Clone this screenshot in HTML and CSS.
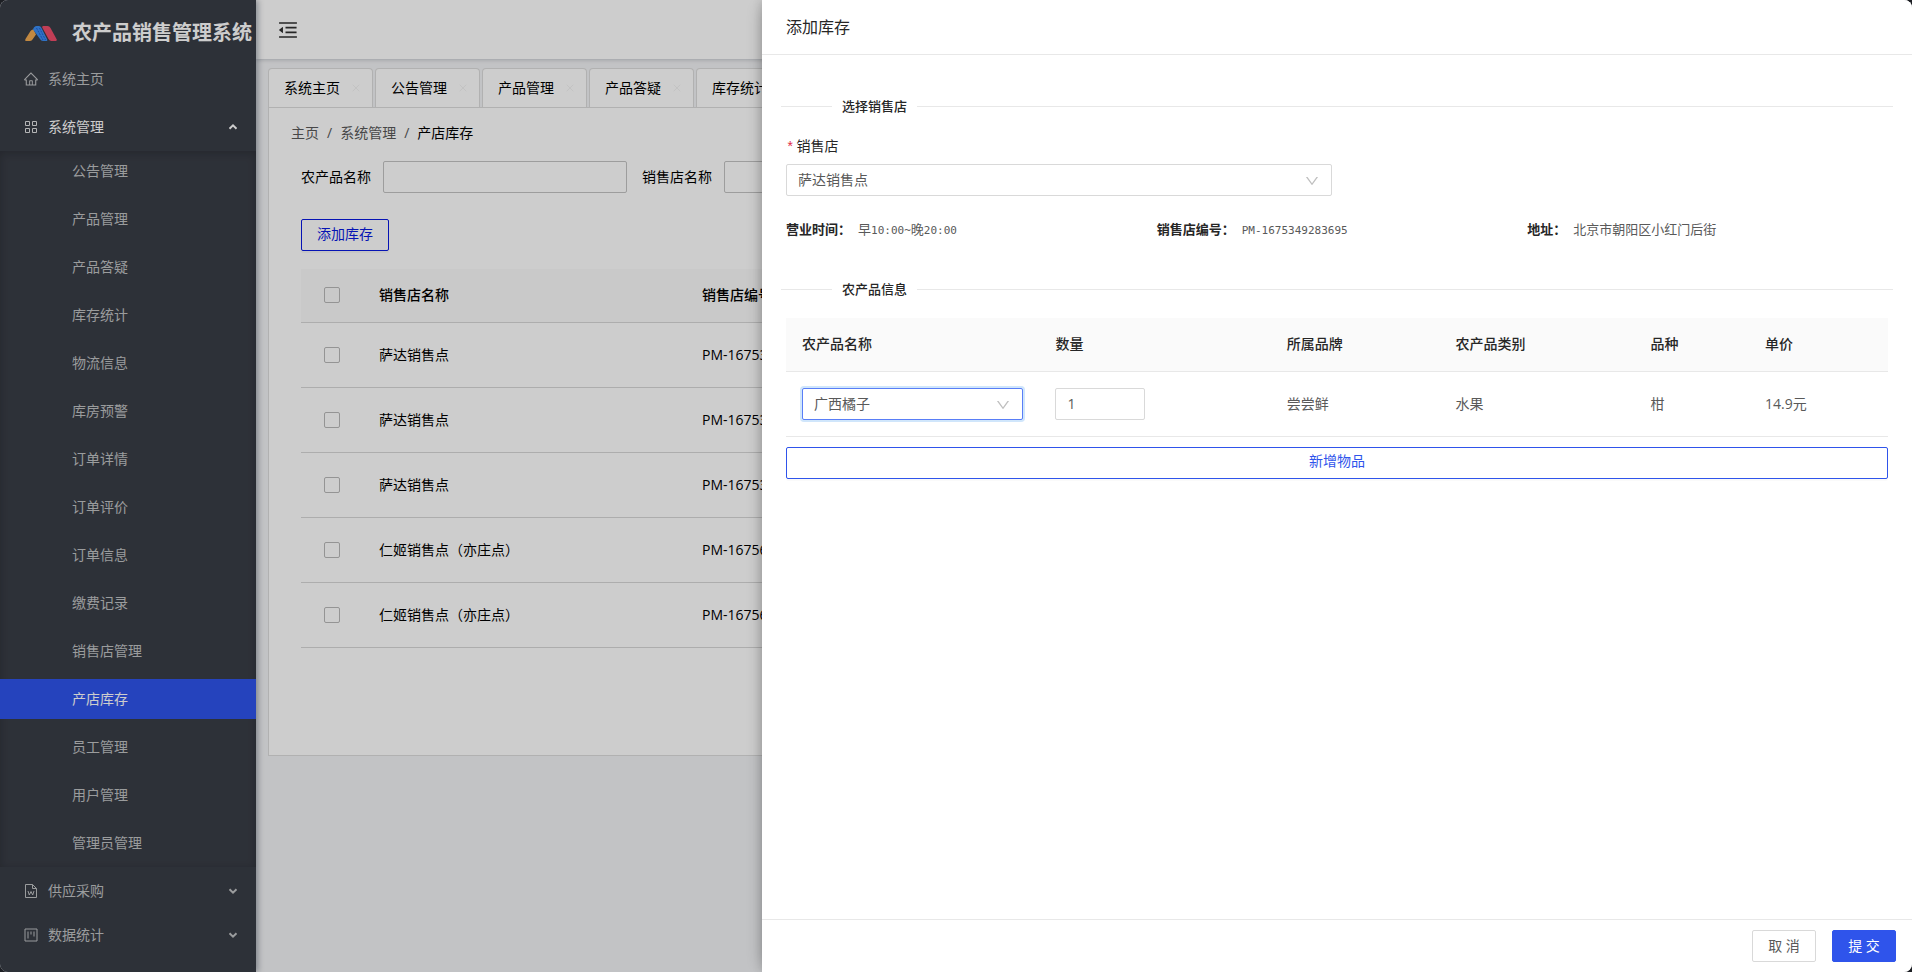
FILE: index.html
```html
<!DOCTYPE html>
<html lang="zh-CN">
<head>
<meta charset="utf-8">
<title>农产品销售管理系统</title>
<link rel="stylesheet" href="styles.css">
</head>
<body>
<svg class="defs" aria-hidden="true">
  <symbol id="arrow-down" viewBox="0 0 1024 1024"><path fill="currentColor" d="M884 256h-75c-5.1 0-9.900 2.500-12.900 6.600L512 654.200 227.900 262.600c-3-4.100-7.800-6.600-12.900-6.600h-75c-6.500 0-10.300 7.400-6.500 12.700l352.600 486.100c12.800 17.600 39 17.600 51.700 0l352.600-486.100c3.900-5.300.1-12.700-6.400-12.700z"/></symbol>
  <symbol id="caret" viewBox="0 0 10 10"><path fill="none" stroke="currentColor" stroke-width="2" d="M1.500 3.200 5 6.700l3.500-3.500"/></symbol>
  <symbol id="close" viewBox="0 0 10 10"><path fill="none" stroke="currentColor" stroke-width="1" d="M1 1l8 8M9 1L1 9"/></symbol>
</svg>
<div class="app">
  <aside class="sidebar">
    <div class="brand">
      <svg class="brand-logo" viewBox="0 0 33 17" aria-hidden="true">
        <path fill="#f2ab52" d="M9.500 4.500 12 9.500 8.500 14.500Q7.500 16 5.500 16H2.500Q.5 16 1.500 14L6.500 6Q8 4 9.500 4.500z"/>
        <path fill="#3b8ef5" d="M9 4.500Q10 .8 13 1h2q1.500 0 2.500 2l5.500 11q1 2-1 2h-3q-2 0-3-2z"/>
        <path fill="none" stroke="#1f5fd0" stroke-width="1" stroke-dasharray="2 1" d="M12.500 3l6.500 12M15.500 3l6 12"/>
        <path fill="#f04e6c" d="M18.500 3Q17.500 1 19.500 1h4q2 0 3 2l6 11q1 2-1 2h-4q-2 0-3-2z"/>
      </svg>
      <h1>农产品销售管理系统</h1>
    </div>
    <nav class="menu">
      <a class="item" href="#">
        <svg class="icon" viewBox="52 64 920 896" aria-hidden="true"><path fill="currentColor" d="M946.500 505L560.100 118.800l-25.900-25.900a31.500 31.500 0 0 0-44.400 0L77.500 505a63.900 63.900 0 0 0-18.800 46c.4 35.200 29.700 63.300 64.900 63.300h42.500V940h691.800V614.300h43.400c17.100 0 33.200-6.700 45.300-18.800a63.600 63.600 0 0 0 18.700-45.300c0-17-6.700-33.100-18.800-45.200zM568 868H456V664h112v204zm217.900-325.700V868H632V640c0-22.100-17.900-40-40-40H432c-22.100 0-40 17.900-40 40v228H238.100V542.300h-96l370-369.700 23.100 23.100L882 542.300h-96.100z"/></svg>
        <span>系统主页</span>
      </a>
      <button class="item open" type="button" aria-expanded="true">
        <svg class="icon" viewBox="0 0 14 14" fill="none" stroke="currentColor" aria-hidden="true"><path d="M1.500 1.500h4v4h-4zM8.500 1.500h4v4h-4zM1.500 8.500h4v4h-4zM8.500 8.500h4v4h-4z"/></svg>
        <span>系统管理</span>
        <svg class="caret flip" aria-hidden="true"><use href="#caret"/></svg>
      </button>
      <div class="submenu">
        <a href="#">公告管理</a>
        <a href="#">产品管理</a>
        <a href="#">产品答疑</a>
        <a href="#">库存统计</a>
        <a href="#">物流信息</a>
        <a href="#">库房预警</a>
        <a href="#">订单详情</a>
        <a href="#">订单评价</a>
        <a href="#">订单信息</a>
        <a href="#">缴费记录</a>
        <a href="#">销售店管理</a>
        <a class="active" href="#">产店库存</a>
        <a href="#">员工管理</a>
        <a href="#">用户管理</a>
        <a href="#">管理员管理</a>
      </div>
      <button class="item closed" type="button" aria-expanded="false">
        <svg class="icon" viewBox="0 0 14 14" fill="none" stroke="currentColor" aria-hidden="true"><path d="M1.500.5h7l4 4v9h-11zM8.500.5v4h4M4 7l1.300 4L7 7.500 8.700 11 10 7"/></svg>
        <span>供应采购</span>
        <svg class="caret" aria-hidden="true"><use href="#caret"/></svg>
      </button>
      <button class="item closed" type="button" aria-expanded="false">
        <svg class="icon" viewBox="0 0 14 14" fill="none" stroke="currentColor" aria-hidden="true"><path d="M1 1h12v12H1zM4 3.500v7M7 3.500v3M10 3.500v5"/></svg>
        <span>数据统计</span>
        <svg class="caret" aria-hidden="true"><use href="#caret"/></svg>
      </button>
    </nav>
  </aside>

  <div class="main">
    <header class="topbar">
      <button class="fold" type="button" aria-label="收起菜单">
        <svg viewBox="64 64 896 896" aria-hidden="true"><path fill="currentColor" d="M408 442h480c4.400 0 8-3.600 8-8v-56c0-4.400-3.600-8-8-8H408c-4.400 0-8 3.600-8 8v56c0 4.400 3.600 8 8 8zm-8 204c0 4.400 3.600 8 8 8h480c4.400 0 8-3.600 8-8v-56c0-4.400-3.600-8-8-8H408c-4.400 0-8 3.600-8 8v56zm504-486H120c-4.400 0-8 3.600-8 8v56c0 4.400 3.600 8 8 8h784c4.400 0 8-3.600 8-8v-56c0-4.400-3.600-8-8-8zm0 632H120c-4.400 0-8 3.600-8 8v56c0 4.400 3.600 8 8 8h784c4.400 0 8-3.600 8-8v-56c0-4.400-3.600-8-8-8zM115.400 518.900L271.700 642c5.800 4.600 14.400.5 14.400-6.900V388.900c0-7.400-8.500-11.500-14.400-6.900L115.400 505.100a8.740 8.740 0 0 0 0 13.800z"/></svg>
      </button>
    </header>
    <div class="workspace">
      <div class="tabs">
        <button class="tab" type="button">系统主页<svg aria-hidden="true"><use href="#close"/></svg></button>
        <button class="tab" type="button">公告管理<svg aria-hidden="true"><use href="#close"/></svg></button>
        <button class="tab" type="button">产品管理<svg aria-hidden="true"><use href="#close"/></svg></button>
        <button class="tab" type="button">产品答疑<svg aria-hidden="true"><use href="#close"/></svg></button>
        <button class="tab" type="button">库存统计<svg aria-hidden="true"><use href="#close"/></svg></button>
      </div>
      <section class="page">
        <nav class="crumbs"><a href="#">主页</a><i>/</i><a href="#">系统管理</a><i>/</i><span>产店库存</span></nav>
        <div class="page-body">
          <form class="filters">
            <label for="f-product">农产品名称</label>
            <input id="f-product" type="text">
            <label for="f-store">销售店名称</label>
            <input id="f-store" type="text">
          </form>
          <button class="btn add" type="button">添加库存</button>
          <table class="stores">
            <colgroup><col class="c-check"><col class="c-name"><col></colgroup>
            <thead><tr><th><input type="checkbox" aria-label="全选"></th><th>销售店名称</th><th>销售店编号</th></tr></thead>
            <tbody>
              <tr><td><input type="checkbox" aria-label="选择"></td><td>萨达销售点</td><td>PM-16753</td></tr>
              <tr><td><input type="checkbox" aria-label="选择"></td><td>萨达销售点</td><td>PM-16753</td></tr>
              <tr><td><input type="checkbox" aria-label="选择"></td><td>萨达销售点</td><td>PM-16753</td></tr>
              <tr><td><input type="checkbox" aria-label="选择"></td><td>仁姬销售点（亦庄点）</td><td>PM-16756</td></tr>
              <tr><td><input type="checkbox" aria-label="选择"></td><td>仁姬销售点（亦庄点）</td><td>PM-16756</td></tr>
            </tbody>
          </table>
        </div>
      </section>
    </div>
  </div>

  <div class="mask"></div>

  <section class="drawer" role="dialog" aria-labelledby="drawer-title">
    <header class="drawer-head"><h2 id="drawer-title">添加库存</h2></header>
    <div class="drawer-body">
      <h3 class="divider">选择销售店</h3>
      <div class="field">
        <label for="store"><b>*</b>销售店</label>
        <div class="select">
          <select id="store"><option>萨达销售点</option></select>
          <svg aria-hidden="true"><use href="#arrow-down"/></svg>
        </div>
      </div>
      <dl class="facts">
        <div><dt>营业时间：</dt><dd>早<code>10:00~</code>晚<code>20:00</code></dd></div>
        <div><dt>销售店编号：</dt><dd><code>PM-1675349283695</code></dd></div>
        <div><dt>地址：</dt><dd>北京市朝阳区小红门后街</dd></div>
      </dl>
      <h3 class="divider">农产品信息</h3>
      <div class="goods-wrap">
        <table class="goods">
          <colgroup><col class="g1"><col class="g2"><col class="g3"><col class="g4"><col class="g5"><col></colgroup>
          <thead><tr><th>农产品名称</th><th>数量</th><th>所属品牌</th><th>农产品类别</th><th>品种</th><th>单价</th></tr></thead>
          <tbody><tr>
            <td><div class="select focused"><select aria-label="农产品名称"><option>广西橘子</option></select><svg aria-hidden="true"><use href="#arrow-down"/></svg></div></td>
            <td><input class="qty" type="text" inputmode="numeric" value="1" aria-label="数量"></td>
            <td>尝尝鲜</td><td>水果</td><td>柑</td><td>14.9元</td>
          </tr></tbody>
        </table>
        <button class="btn wide" type="button">新增物品</button>
      </div>
    </div>
    <footer class="drawer-foot">
      <button class="btn plain" type="button">取 消</button>
      <button class="btn primary" type="button">提 交</button>
    </footer>
  </section>
</div>
</body>
</html>
```

FILE: styles.css
```css
* { box-sizing: border-box; }

body {
  margin: 0;
  background: #1d1f24;
  color: #000;
  font: 14px/22px "Open Sans", "Noto Sans CJK SC", sans-serif;
}

button, input, select { font: inherit; color: inherit; margin: 0; }
button { cursor: pointer; }
a { color: inherit; text-decoration: none; }
h1, h2, h3, dl, dd { margin: 0; }
.defs { display: none; }

.app {
  position: relative;
  display: flex;
  height: 100vh;
  overflow: hidden;
  border-radius: 8px;
  background: #f2f3f5;
}

/* Sidebar */
.sidebar {
  position: relative;
  z-index: 1;
  flex: none;
  width: 256px;
  overflow: hidden;
  background: #393d46;
  color: #c0c2c4;
  box-shadow: 2px 0 6px rgba(0, 21, 41, .35);
}
.brand { display: flex; align-items: center; height: 59px; padding: 7px 0 0 24px; gap: 15px; }
.brand-logo { flex: none; width: 33px; height: 17px; }
.brand h1 { color: #fff; font-size: 20px; line-height: 32px; font-weight: 600; white-space: nowrap; }

.item {
  display: flex;
  align-items: center;
  gap: 10px;
  width: 100%;
  height: 40px;
  padding: 0 18px 0 24px;
  border: 0;
  background: none;
  text-align: left;
}
.item.open { margin: 8px 0 4px; color: #fff; }
.item.closed { margin-top: 4px; }
.icon { width: 14px; height: 14px; }
.item.open .icon { color: #e0e1e3; }
.caret { width: 10px; height: 10px; margin-left: auto; }
.flip { transform: scaleY(-1); }

.submenu {
  display: flex;
  flex-direction: column;
  gap: 8px;
  padding-bottom: 4px;
  box-shadow: inset 0 2px 8px rgba(0, 0, 0, .2);
}
.submenu a { height: 40px; padding-left: 72px; line-height: 40px; }
.submenu .active { background: #2f54eb; color: #fff; }

/* Page behind the drawer */
.main { flex: 1; min-width: 0; }
.topbar {
  display: flex;
  align-items: center;
  height: 59px;
  padding: 0 0 0 22px;
  background: #fff;
  box-shadow: 0 1px 4px rgba(0, 21, 41, .2);
}
.fold { display: flex; padding: 0; border: 0; background: none; color: #303030; }
.fold svg { width: 20px; height: 20px; }
.workspace { padding: 9px 12px 0; }
.tabs { display: flex; gap: 2px; }
.tab {
  display: flex;
  align-items: center;
  gap: 12px;
  height: 39px;
  padding: 0 15px;
  width: 105px;
  border: 1px solid #dcdcdc;
  border-bottom: 0;
  border-radius: 4px 4px 0 0;
  background: #fff;
  white-space: nowrap;
}
.tab svg { flex: none; width: 8px; height: 8px; color: #f0f0f0; }
.page { min-height: 649px; padding: 14px 22px; border: 1px solid #dcdcdc; background: #fff; }
.crumbs { display: flex; gap: 8px; color: #595959; }
.crumbs i { font-style: normal; }
.crumbs span { color: #000; }
.page-body { padding: 17px 10px 0; }
.filters { display: flex; align-items: center; }
.filters label { width: 82px; }
.filters input {
  width: 244px;
  height: 32px;
  margin-right: 15px;
  padding: 4px 11px;
  border: 1px solid #c4c4c4;
  border-radius: 2px;
  background: #fff;
}

.btn { height: 32px; padding: 0 15px 3px; border: 1px solid #2f54eb; border-radius: 2px; background: #fff; color: #2f54eb; line-height: 22px; }
.add { display: block; margin: 26px 0 18px; border-color: #0818e0; color: #0818e0; box-shadow: 0 2px 0 rgba(0, 0, 0, .04); }

table { width: 100%; border-collapse: collapse; table-layout: fixed; }
th { font-weight: 500; text-align: left; }
.stores th, .stores td { padding: 0; border-bottom: 1px solid #d8d8d8; }
.stores th { height: 53px; background: #fafafa; }
.stores td { height: 65px; }
.c-check { width: 78px; }
.c-name { width: 323px; }
.stores input {
  appearance: none;
  display: block;
  width: 16px;
  height: 16px;
  margin-left: 23px;
  border: 1px solid #b8b8b8;
  border-radius: 2px;
}

.mask { position: absolute; z-index: 2; inset: 0; background: rgba(0, 0, 0, .195); }

/* Drawer */
.drawer {
  position: absolute;
  z-index: 3;
  top: 0;
  right: 0;
  bottom: 0;
  display: flex;
  flex-direction: column;
  width: 1150px;
  max-width: 100%;
  background: #fff;
  color: #595959;
  box-shadow: -6px 0 16px -8px rgba(0, 0, 0, .3), -2px 0 8px rgba(0, 0, 0, .1);
}
.drawer-head { padding: 16px 24px; border-bottom: 1px solid #e8e8e8; }
.drawer-head h2 { color: #262626; font-size: 16px; line-height: 22px; font-weight: 400; }
.drawer-body { flex: 1; padding: 40px 19px 0; }

.divider {
  display: flex;
  align-items: center;
  gap: 10px;
  color: #262626;
  font-size: 13px;
  line-height: 22px;
  font-weight: 500;
}
.divider::before, .divider::after { content: ""; height: 1px; background: #e8e8e8; }
.divider::before { width: 51px; }
.divider::after { flex: 1; }

.field { width: 50%; padding: 18px 5px 0; }
.field label { display: flex; gap: 2px; padding-bottom: 5px; color: #262626; }
.field b { padding-top: 2px; color: #e02c4a; font: 14px/22px "Liberation Mono", monospace; }
.select { position: relative; }
.select select {
  appearance: none;
  display: block;
  width: 100%;
  height: 32px;
  padding: 0 11px;
  border: 1px solid #d9d9d9;
  border-radius: 2px;
  background: #fff;
}
.select svg { position: absolute; top: 9px; right: 12px; width: 16px; height: 16px; color: #bfbfbf; pointer-events: none; }
.focused select { border-color: #597ef7; box-shadow: 0 0 0 2px #d0e6fb; }

.facts { display: grid; grid-template-columns: repeat(3, 1fr); padding: 22px 0 36px; font-size: 13px; }
.facts > div { display: flex; gap: 7px; padding-left: 5px; }
.facts dt { color: #262626; font-weight: 700; }
.facts code { font: 11px/22px "DejaVu Sans Mono", monospace; }

.goods-wrap { padding: 18px 5px 0; }
.goods th, .goods td { padding: 0 16px; border-bottom: 1px solid #e8e8e8; }
.goods th { height: 53px; background: #fafafa; color: #262626; }
.goods td { height: 65px; }
.g1 { width: 23%; }
.g2 { width: 21%; }
.g3 { width: 15.3%; }
.g4 { width: 17.7%; }
.g5 { width: 10.4%; }
.qty { display: block; width: 90px; height: 32px; padding: 0 11px; border: 1px solid #d9d9d9; border-radius: 2px; }
.wide { width: 100%; margin-top: 10px; box-shadow: 0 2px 0 rgba(0, 0, 0, .02); }

.drawer-foot { display: flex; justify-content: flex-end; gap: 16px; padding: 10px 16px; border-top: 1px solid #e8e8e8; }
.drawer-foot .btn { width: 64px; padding-bottom: 0; }
.plain { border-color: #d9d9d9; color: #595959; }
.drawer-foot .primary { color: #fff; background: #2f54eb; }
```
